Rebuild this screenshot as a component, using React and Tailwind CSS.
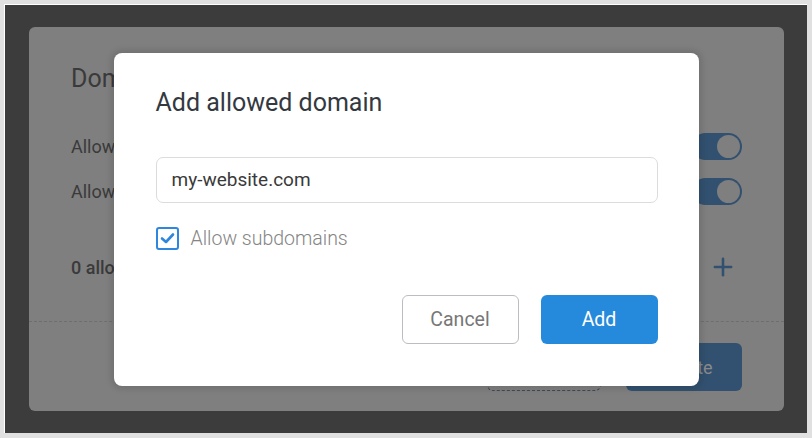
import { Plus } from "lucide-react";

function Toggle() {
  return (
    <div className="w-[50px] h-[27px] rounded-full bg-[#325170] flex items-center justify-end pr-[2px]">
      <div className="w-[23px] h-[23px] rounded-full bg-[#7f7f7f]" />
    </div>
  );
}

export default function App() {
  return (
    <div
      className="w-[812px] h-[438px] bg-[#e0e0e0] pl-[4px] pt-[4px] pr-[5px] pb-[5px]"
      style={{ fontFamily: "Roboto, 'Liberation Sans', sans-serif" }}
    >
      <div className="relative w-full h-full bg-[#3c3c3c] border-l border-t border-white pl-[24px] pr-[23px] pt-[22px] pb-[22px]">
        {/* page card behind the dialog */}
        <div className="w-full h-full bg-[#7f7f7f] rounded-[6px] flex flex-col">
          <div className="flex-1 px-[42px] pt-[36px]">
            <h2 className="text-[25px] text-[#3a3a3a] leading-[32px]">Domain allowlist</h2>
            <div className="mt-[38px] flex items-center justify-between">
              <span className="text-[18px] text-[#3a3a3a]">Allow all domains</span>
              <Toggle />
            </div>
            <div className="mt-[18px] flex items-center justify-between">
              <span className="text-[18px] text-[#3a3a3a]">Allow localhost</span>
              <Toggle />
            </div>
            <div className="mt-[48px] flex items-center justify-between">
              <span className="text-[18px] font-medium text-[#3a3a3a]">0 allowed domains</span>
              <Plus size={28} strokeWidth={2.2} className="text-[#325170] mr-[5px]" />
            </div>
          </div>
          <div className="border-t border-dashed border-[#6e6e6e] flex justify-end gap-[25px] px-[42px] pt-[21px] pb-[20px]">
            <button className="w-[114px] h-[48px] rounded-[6px] border border-dashed border-[#3e4a56] text-[18px] text-[#555]">
              Cancel
            </button>
            <button className="w-[116px] h-[48px] rounded-[6px] bg-[#325170] text-[18px] text-[#8a8a8a]">
              Update
            </button>
          </div>
        </div>

        {/* dialog */}
        <div className="absolute inset-0 flex items-center justify-center">
          <div className="w-[585px] h-[333px] bg-white rounded-[8px] shadow-[0_0_6px_3px_rgba(0,0,0,0.12)] pl-[42px] pr-[41px] pt-[35px]">
            <h1 className="text-[25px] leading-[30px] text-[#33393f]">Add allowed domain</h1>
            <input
              readOnly
              value="my-website.com"
              className="mt-[39px] w-full h-[46px] rounded-[7px] border border-[#dcdcdc] px-[15px] text-[19px] text-[#3a3a3a] outline-none"
            />
            <label className="mt-[21px] flex items-center gap-[12px]">
              <span className="w-[23px] h-[23px] rounded-[3px] border-2 border-[#2e86de] flex items-center justify-center">
                <svg width="15" height="15" viewBox="0 0 15 15" fill="none">
                  <path d="M2 7.5 L6 11 L13 3.5" stroke="#2e86de" strokeWidth="2.6" strokeLinecap="round" strokeLinejoin="round" />
                </svg>
              </span>
              <span className="text-[19.5px] font-light text-[#858585]">Allow subdomains</span>
            </label>
            <div className="mt-[42px] flex justify-end gap-[22px]">
              <button className="w-[117px] h-[49px] rounded-[6px] border border-[#babec2] text-[19.5px] text-[#777]">
                Cancel
              </button>
              <button className="w-[117px] h-[49px] rounded-[6px] bg-[#2589dc] text-[19.5px] text-white">
                Add
              </button>
            </div>
          </div>
        </div>
      </div>
    </div>
  );
}
